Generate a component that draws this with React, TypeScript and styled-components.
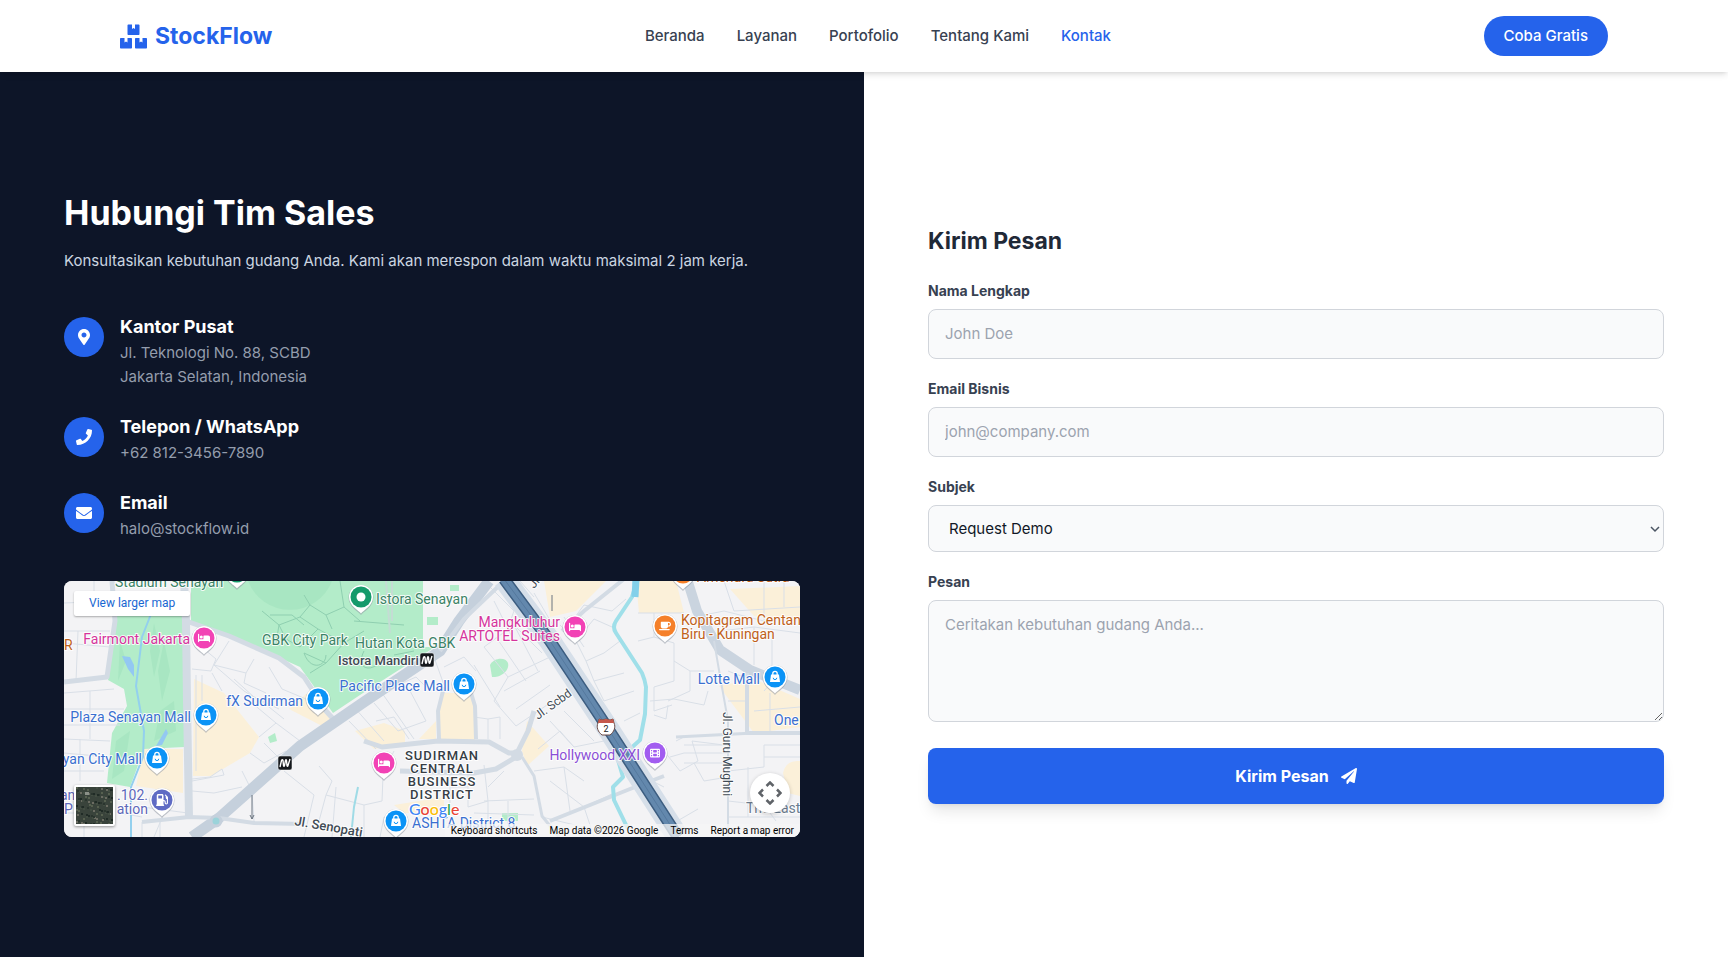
import React from "react";
import styled, { createGlobalStyle } from "styled-components";
import { FaBed, FaFilm, FaGasPump, FaMugSaucer } from "react-icons/fa6";
import { FaBoxes, FaEnvelope, FaMapMarkerAlt, FaPaperPlane, FaPhone } from "react-icons/fa";

const blue = "#2563eb";
const navy = "#0d1528";

const GlobalStyle = createGlobalStyle`
  *, *::before, *::after { box-sizing: border-box; }
  body {
    margin: 0;
    background: #ffffff;
    color: #1f2937;
    font-family: Inter, "Liberation Sans", sans-serif;
    font-size: 16px;
    line-height: 24px;
    -webkit-font-smoothing: antialiased;
  }
  h1, h2, h3, p, address { margin: 0; font-style: normal; }
  a { color: inherit; text-decoration: none; }
  input, select, textarea, button { font: inherit; }
`;

const Page = styled.div`
  display: flex;
  flex-direction: column;
  min-height: 100vh;
`;

const Header = styled.header`
  position: sticky;
  top: 0;
  z-index: 10;
  background: #ffffff;
  box-shadow: 0 4px 6px -1px rgba(0, 0, 0, 0.1), 0 2px 4px -2px rgba(0, 0, 0, 0.1);
`;

const HeaderInner = styled.div`
  display: flex;
  align-items: center;
  justify-content: space-between;
  max-width: 1536px;
  margin: 0 auto;
  padding: 16px 24px;
`;

const Logo = styled.a`
  display: flex;
  align-items: center;
  gap: 8px;
  color: ${blue};
  font-size: 23px;
  line-height: 32px;
  font-weight: 700;
`;

const Nav = styled.nav`
  display: flex;
  gap: 32px;
`;

const NavLink = styled.a<{ $active?: boolean }>`
  color: ${(p) => (p.$active ? blue : "#374151")};
  font-size: 15px;
  font-weight: 500;
`;

const TrialButton = styled.button`
  padding: 8px 20px;
  border: 0;
  border-radius: 20px;
  background: ${blue};
  color: #ffffff;
  font-size: 15px;
  line-height: 24px;
  font-weight: 500;
`;

const Main = styled.main`
  flex: 1;
  display: grid;
  grid-template-columns: repeat(2, minmax(0, 1fr));
`;

const Panel = styled.section<{ $dark?: boolean }>`
  display: flex;
  flex-direction: column;
  justify-content: center;
  padding: 64px;
  background: ${(p) => (p.$dark ? navy : "#ffffff")};
  color: ${(p) => (p.$dark ? "#ffffff" : "#1f2937")};
`;

const Title = styled.h1`
  font-size: 34px;
  line-height: 40px;
  font-weight: 700;
  margin-bottom: 16px;
`;

const Lead = styled.p`
  color: #cbd5e1;
  font-size: 15px;
  margin-bottom: 40px;
`;

const ContactList = styled.div`
  display: flex;
  flex-direction: column;
  gap: 24px;
  margin-bottom: 40px;
`;

const Contact = styled.div`
  display: flex;
  align-items: flex-start;
  gap: 16px;
`;

const ContactIcon = styled.span`
  display: flex;
  align-items: center;
  justify-content: center;
  flex: none;
  width: 40px;
  height: 40px;
  margin-top: 4px;
  border-radius: 50%;
  background: ${blue};
  font-size: 16px;
`;

const ContactName = styled.h3`
  font-size: 18px;
  line-height: 28px;
  font-weight: 700;
`;

const ContactText = styled.address`
  color: #949dad;
  font-size: 15px;
`;

const FormTitle = styled.h2`
  font-size: 23px;
  line-height: 32px;
  font-weight: 700;
  margin-bottom: 24px;
`;

const Form = styled.form`
  display: flex;
  flex-direction: column;
  gap: 20px;
`;

const Field = styled.div`
  display: flex;
  flex-direction: column;
  gap: 8px;
`;

const Label = styled.label`
  color: #374151;
  font-size: 14px;
  line-height: 20px;
  font-weight: 700;
`;

const fieldBox = `
  width: 100%;
  padding: 12px 16px;
  border: 1px solid #d1d5db;
  border-radius: 8px;
  background: #f9fafb;
  color: #111827;
  font-size: 15px;
  line-height: 24px;
  &::placeholder { color: #9ca3af; opacity: 1; }
`;

const Input = styled.input`
  ${fieldBox}
`;

const SelectBox = styled.div`
  position: relative;
`;

const Select = styled.select`
  ${fieldBox}
  display: block;
  height: 47px;
  padding: 0 20px;
  appearance: none;
`;

const Chevron = styled.svg`
  position: absolute;
  top: 20px;
  right: 4px;
  pointer-events: none;
`;

const TextArea = styled.textarea`
  ${fieldBox}
  display: block;
  height: 122px;
  margin-bottom: 6px;
  resize: vertical;
`;

const SubmitButton = styled.button`
  display: flex;
  align-items: center;
  justify-content: center;
  gap: 12px;
  padding: 16px;
  border: 0;
  border-radius: 8px;
  background: ${blue};
  color: #ffffff;
  font-size: 16px;
  line-height: 24px;
  font-weight: 700;
  box-shadow: 0 10px 15px -3px rgba(0, 0, 0, 0.1), 0 4px 6px -4px rgba(0, 0, 0, 0.1);
`;

/* ---------- Map ---------- */

const MapFrame = styled.div`
  position: relative;
  height: 256px;
  overflow: hidden;
  border-radius: 8px;
  background: #f3f3f5;
  font-family: Roboto, "Liberation Sans", sans-serif;
`;

const MapDrawing = styled.svg`
  display: block;
  width: 100%;
  height: 100%;
`;

const LargerMapLink = styled.a`
  position: absolute;
  top: 10px;
  left: 10px;
  padding: 0 15px;
  border-radius: 2px;
  background: #ffffff;
  box-shadow: 0 1px 2px rgba(0, 0, 0, 0.3);
  color: #1967d2;
  font-size: 12px;
  line-height: 25px;
`;

const SatelliteButton = styled.button`
  position: absolute;
  left: 10px;
  bottom: 11px;
  width: 41px;
  height: 41px;
  padding: 0;
  border: 2px solid #ffffff;
  border-radius: 2px;
  overflow: hidden;
  background: #39423b;
  box-shadow: 0 1px 3px rgba(0, 0, 0, 0.4);
`;

const CameraButton = styled.button`
  position: absolute;
  right: 10px;
  bottom: 24px;
  display: flex;
  align-items: center;
  justify-content: center;
  width: 40px;
  height: 40px;
  padding: 0;
  border: 0;
  border-radius: 50%;
  background: #ffffff;
  box-shadow: 0 1px 4px rgba(0, 0, 0, 0.2);
`;

const MapFooter = styled.div`
  position: absolute;
  right: 0;
  bottom: 0;
  display: flex;
  gap: 12px;
  padding: 0 6px;
  background: rgba(245, 245, 245, 0.75);
  color: #000000;
  font-size: 10px;
  line-height: 13px;
`;

const MapTextButton = styled.button`
  padding: 0;
  border: 0;
  background: none;
  color: inherit;
`;

type PinKind = "bag" | "bed" | "cup" | "gas" | "film" | "dot";

const pinColors: Record<PinKind, string> = {
  bag: "#0b93f6",
  bed: "#f242b5",
  cup: "#f5802a",
  gas: "#5f6bc4",
  film: "#a25df0",
  dot: "#159a6b",
};

function Pin({ x, y, kind }: { x: number; y: number; kind: PinKind }) {
  return (
    <g transform={`translate(${x} ${y})`}>
      <path d="M0 18C-2 15-12.500 10-12.500 0.500A12.500 12.500 0 0 1 12.500 0.500C12.500 10 2 15 0 18Z" fill="#8f98a3" opacity="0.55" />
      <path d="M0 16.500C-2 13.500-12 9-12 0A12 12 0 0 1 12 0C12 9 2 13.500 0 16.500Z" fill="#ffffff" />
      <circle r="10.500" fill={pinColors[kind]} />
      {kind === "dot" && <circle r="4.500" fill="#ffffff" />}
      {kind === "bag" && (
        <>
          <path d="M-2.200 -1V-3.500A2.200 2.200 0 0 1 2.200 -3.500V-1" fill="none" stroke="#ffffff" strokeWidth="1.300" />
          <path d="M-4 -2.500H4L5 5H-5Z" fill="#ffffff" />
          <path d="M-1.800 0.800A1.800 1.800 0 0 0 1.800 0.800" fill="none" stroke={pinColors.bag} strokeWidth="1" />
        </>
      )}
      {kind === "bed" && <FaBed x={-6} y={-6} size={12} color="#ffffff" />}
      {kind === "cup" && <FaMugSaucer x={-6} y={-6} size={12} color="#ffffff" />}
      {kind === "gas" && <FaGasPump x={-6} y={-6} size={12} color="#ffffff" />}
      {kind === "film" && <FaFilm x={-5} y={-5} size={10} color="#ffffff" />}
    </g>
  );
}

function Metro({ x, y }: { x: number; y: number }) {
  return (
    <g transform={`translate(${x} ${y})`}>
      <rect x="-7" y="-7" width="14" height="14" rx="2" fill="#15181c" stroke="#ffffff" strokeWidth="0.500" />
      <path
        d="M-5 4L-3.500 -2.500Q-2.500 -4 -2 -2.500L-1.500 2.500Q-1 4 -0.500 2.500L0.500 -2.500Q1 -4 1.500 -2.500L2 2.500Q2.500 4 3 2.500L5 -4"
        fill="none"
        stroke="#ffffff"
        strokeWidth="1.400"
      />
    </g>
  );
}

type PlaceTone = "park" | "shop" | "hotel" | "food" | "cinema" | "fuel" | "area" | "road";

const placeColors: Record<PlaceTone, string> = {
  park: "#3b8266",
  shop: "#3a6fd0",
  hotel: "#d5349c",
  food: "#c0611a",
  cinema: "#8a4fd6",
  fuel: "#5d68ba",
  area: "#6b7c8f",
  road: "#3f4a54",
};

const Place = styled.text<{ $tone: PlaceTone }>`
  fill: ${(p) => placeColors[p.$tone]};
  font-size: ${(p) => (p.$tone === "road" ? 12 : 14)}px;
  stroke: #ffffff;
  stroke-width: 2px;
  stroke-opacity: 0.85;
  stroke-linejoin: round;
  paint-order: stroke;
`;

const StationLabel = styled(Place)`
  font-size: 13px;
  font-weight: 500;
`;

const DistrictLabel = styled.text`
  fill: #363d45;
  font-size: 13px;
  font-weight: 500;
  letter-spacing: 1px;
  text-anchor: middle;
  stroke: #ffffff;
  stroke-width: 2px;
  paint-order: stroke;
`;

const Wordmark = styled.text`
  font-family: Lato, sans-serif;
  font-size: 16px;
  font-weight: 500;
  stroke: #ffffff;
  stroke-width: 2px;
  paint-order: stroke;
`;

const minorRoads = [
  "M0 50H46M0 62L46 66M14 50L12 100M0 22L48 20M30 0V20",
  "M0 112L50 108M0 128H60M0 144H56M0 158L46 160M26 110V158M16 158V200M0 172L44 176M0 190H40",
  "M128 58L152 78L147 90L128 88M165 60L150 84L182 92L180 102L202 112M150 84L180 110L200 122L220 138",
  "M132 94V190M138 94V120M148 92L158 110M170 98L190 116L215 128M190 78L182 92M205 86L218 108L242 118",
  "M195 156L212 142L236 160M212 142L188 122M186 172L200 182L222 170M200 162L216 178M178 190L186 206",
  "M128 198L146 196L158 188L160 194L128 200M128 210L150 212L178 206M78 241V256M96 241V256M78 226L124 232",
  "M188 212L190 240M220 190L250 214L240 256M255 185L268 200L262 214L300 224L318 220L320 170M272 206L268 256M300 224V256M262 214L255 240",
  "M285 140L312 168M290 126L320 160M310 122L334 150L362 140L345 108M318 112L350 158M334 104L352 96L366 110M312 140L330 136L345 158",
  "M370 76L380 104M380 86L400 76L412 90M420 66L444 96L430 120L452 145L486 122M410 84L436 126M444 96L486 76M420 66L450 44L478 72",
  "M432 56L462 100M450 44L474 90M440 110L476 90M452 128L486 104M410 136L424 138L436 136V158M424 138V158",
  "M386 190V226M404 190V226M386 206H404M420 184L424 220L404 226M420 220L470 218M424 220V256M444 220V256M410 232L470 234M440 190L424 206",
  "M474 168L496 150L510 166L540 160M470 190L500 186L520 200M500 186L506 230M486 200L520 226L550 212M520 226L530 256M478 236L560 256",
  "M496 44L512 60L530 38L548 46M512 60L522 80L540 72L556 60M522 80L530 100L560 92M508 40L520 24L548 30L562 18M530 100L540 120L570 110M500 36L520 66",
  "M500 130L530 160M486 140L510 166M560 140L576 132M550 150L570 176M574 60L590 56L610 62V100L590 106V130L608 124M610 80L626 90H650M626 90V110L604 120",
  "M574 32H620M590 32V56M586 120L610 118L640 124M604 124L602 138L590 134M640 124L644 110M640 34L660 30L700 40M660 0L670 30L736 26M700 0V40M720 0V26",
  "M656 50L690 46L736 52M690 46V84M708 50V90M664 90L690 100M700 110L712 96M664 120H683M690 130L736 126M706 112V150",
  "M600 170L616 190L634 180L628 160L660 164M612 160L620 156M606 176L620 172M620 172H664M620 182H664M620 164H664M630 182L640 200L664 196",
  "M664 190L700 186V164H736M700 176H736M664 220L700 224L712 240M664 236H736M684 186V236M596 250L634 228M570 190L600 220L590 236M580 196L600 206",
  "M0 232H40M20 240V256M56 232L78 236M100 232L90 256M320 190L330 170M330 250L320 236L316 256",
  "M426 6L450 30L444 46M450 10L470 30L480 56M456 0L470 16M430 20L448 56M440 14C460 4 470 20 478 40M470 12L490 46",
];

const mainRoads: { d: string; w: number; c?: string }[] = [
  { d: "M48 0L51 40L43 96L0 101", w: 5 },
  { d: "M120 0L122 40L123 120L125 236", w: 8 },
  { d: "M125 41L165 55L215 77L240 96L262 130L272 141", w: 5 },
  { d: "M128 256L155 237L236 165L300 121L376 70L395 40L425 0", w: 11, c: "#c5d0dc" },
  { d: "M440 0L400 38L376 70", w: 4 },
  { d: "M78 241L125 236L155 237L190 242L240 243", w: 4 },
  { d: "M300 160L318 166L374 160L425 161L445 172L453 172L464 150L470 130", w: 5 },
  { d: "M336 190L410 192L432 188L452 176", w: 5 },
  { d: "M375 158L374 130L380 106", w: 4 },
  { d: "M412 158L411 125L404 102", w: 4 },
  { d: "M458 176L470 195L478 235L495 256", w: 3 },
  { d: "M486 240L566 208L600 195", w: 4 },
  { d: "M560 -2L520 30L498 50", w: 4 },
  { d: "M623 -2L633 30L656 69L686 89L736 109", w: 10, c: "#cad4df" },
  { d: "M650 60L656 95L664 140V256", w: 2 },
  { d: "M683 92V152H736", w: 4 },
  { d: "M612 156L690 152", w: 3 },
];

function MapArtwork() {
  return (
    <MapDrawing viewBox="0 0 736 256" preserveAspectRatio="xMidYMid slice" role="img" aria-label="Peta SCBD Jakarta Selatan">
      <rect width="736" height="256" fill="#f3f3f5" />
      <g fill="#fbf0d9">
        <path d="M130 98L160 112L195 156L186 172L147 195H129Z" />
        <path d="M80 168H119V212L72 205Z" />
        <path d="M243 112L272 138L262 147L225 128Z" />
        <path d="M377 112H409L411 159H374Z" />
        <path d="M291 150L320 142L341 150V162L310 168Z" />
        <path d="M355 158L372 140V158Z" />
        <path d="M463 140L485 165L463 185L458 170Z" />
        <path d="M480 0H542L512 30L486 36Z" />
        <path d="M572 0H612L620 32H575Z" />
        <path d="M666 8L736 5V40L690 35Z" />
        <path d="M655 105L690 98L736 118V146L690 152Z" />
        <path d="M719 192C722 180 730 180 736 180V215L724 212Z" />
        <path d="M330 224L380 216V232H340Z" />
      </g>
      <g fill="#b3ecc9">
        <path d="M51 30L47 75L44 99L60 108L63 125L48 152L43 202L66 206L80 168L120 166V30Z" />
        <path d="M127 0V42L160 53L205 72L236 86L269 132L305 108L371 66H359V0Z" />
        <path d="M426 84C430 76 442 76 444 82C446 90 436 97 428 96Z" />
        <rect x="363" y="36" width="11" height="8" />
        <rect x="386" y="4" width="9" height="6" />
        <rect x="438" y="232" width="16" height="8" />
        <path d="M204 156L211 152L213 160L206 162Z" />
      </g>
      <g fill="#a8e6c2">
        <path d="M184 0A45 45 0 0 0 268 0Z" />
        <path d="M90 42L96 70L90 96L86 70Z" />
        <path d="M100 60L106 90L98 120L94 90Z" />
        <path d="M56 60L62 80L54 100Z" />
        <path d="M96 130L110 120L112 150L90 160Z" />
        <path d="M52 160L66 150L60 190L48 198Z" />
      </g>
      <g fill="none" stroke="#8fcfb0" strokeWidth="1">
        <path d="M198 30L215 44L212 62M215 44L236 36L254 48L236 66L222 58Z M236 36L246 24L262 34L280 26M254 48L280 62L262 82L240 72M280 62L300 50M246 24L240 14M262 82L246 92M206 34L228 34L240 44M280 26L276 0M280 26L296 40M290 40L340 44M262 34L268 48" />
        <path d="M240 72C246 90 262 86 262 74M300 70C290 90 310 92 318 78M330 74L350 70" />
        <path d="M322 0L326 52M328 0V40" stroke="#c4dcd4" strokeWidth="2" />
      </g>
      <g fill="none" stroke="#d9dfe7" strokeWidth="1">
        {minorRoads.map((d) => (
          <path key={d} d={d} />
        ))}
      </g>
      <g fill="none" strokeLinejoin="round">
        {mainRoads.map((r) => (
          <path key={r.d} d={r.d} stroke={r.c ?? "#d3dbe4"} strokeWidth={r.w} />
        ))}
        <path d="M87 33L78 56L72 105L80 150L79 176L67 206V256" stroke="#93d0ee" strokeWidth="2" />
        <path d="M58 75L66 76L70 84L70 96L64 88Z M102 148L92 165L98 164L104 152Z" fill="#93c8f2" />
        <path d="M294 206L290 226L287 256" stroke="#9fdbe6" strokeWidth="2" />
        <path d="M574 -2L568 16L552 40Q548 46 552 52L578 92Q581 99 582 106L581 133L576 159L554 179L559 196L549 206L550 219L564 248" stroke="#9fdfe9" strokeWidth="4" />
        <path d="M572 -2L571 16" stroke="#83d0ea" strokeWidth="7" />
        <circle cx="152" cy="240" r="5" fill="#9bd3da" stroke="#c5d0dc" strokeWidth="3" />
        <circle cx="453" cy="174" r="6" fill="#d3dbe4" />
        <path d="M440 -2L486 60L543 146L614 256" stroke="#d6dfe9" strokeWidth="22" />
        <path d="M440 -2L486 60L543 146L614 256" stroke="#3c5d80" strokeWidth="12" />
        <path d="M440 -2L486 60L543 146L614 256" stroke="#6388ad" strokeWidth="9" />
        <path d="M440 -2L486 60L543 146L614 256" stroke="#55799e" strokeWidth="1" />
        <path d="M188 214V238M186 234L188 238L190 234M488 14V30" stroke="#6b7580" strokeWidth="1" />
      </g>

      <Place $tone="park" x="51" y="6">Stadium Senayan</Place>
      <Place $tone="park" x="312" y="23">Istora Senayan</Place>
      <Place $tone="park" x="198" y="64">GBK City Park</Place>
      <Place $tone="park" x="291" y="67">Hutan Kota GBK</Place>
      <StationLabel $tone="road" x="274" y="84">Istora Mandiri</StationLabel>
      <Place $tone="food" x="0" y="69">R</Place>
      <Place $tone="hotel" x="126" y="63" textAnchor="end">Fairmont Jakarta</Place>
      <Place $tone="hotel" x="496" y="46" textAnchor="end">Mangkuluhur</Place>
      <Place $tone="hotel" x="496" y="60" textAnchor="end">ARTOTEL Suites</Place>
      <Place $tone="food" x="633" y="1">Amendra Sutra</Place>
      <Place $tone="food" x="617" y="44">Kopitagram Centan</Place>
      <Place $tone="food" x="617" y="58">Biru - Kuningan</Place>
      <Place $tone="shop" x="386" y="110" textAnchor="end">Pacific Place Mall</Place>
      <Place $tone="shop" x="239" y="125" textAnchor="end">fX Sudirman</Place>
      <Place $tone="shop" x="127" y="141" textAnchor="end">Plaza Senayan Mall</Place>
      <Place $tone="shop" x="78" y="183" textAnchor="end">yan City Mall</Place>
      <Place $tone="shop" x="696" y="103" textAnchor="end">Lotte Mall</Place>
      <Place $tone="shop" x="710" y="144">One</Place>
      <Place $tone="shop" x="348" y="247">ASHTA District 8</Place>
      <Place $tone="cinema" x="576" y="179" textAnchor="end">Hollywood XXI</Place>
      <Place $tone="fuel" x="-4" y="219">an</Place>
      <Place $tone="fuel" x="84" y="219" textAnchor="end">.102.</Place>
      <Place $tone="fuel" x="0" y="233">P</Place>
      <Place $tone="fuel" x="84" y="233" textAnchor="end">ation</Place>
      <Place $tone="area" x="682" y="232">The East</Place>
      <Place $tone="road" transform="translate(474 139) rotate(-36)">Jl. Scbd</Place>
      <Place $tone="road" transform="translate(470 8) rotate(-50)">Jl.</Place>
      <Place $tone="road" transform="translate(659 131) rotate(90)">Jl. Guru Mughni</Place>
      <StationLabel $tone="road" transform="translate(230 244) rotate(10)">Jl. Senopati</StationLabel>
      <DistrictLabel x="378" y="179">SUDIRMAN</DistrictLabel>
      <DistrictLabel x="378" y="192">CENTRAL</DistrictLabel>
      <DistrictLabel x="378" y="205">BUSINESS</DistrictLabel>
      <DistrictLabel x="378" y="218">DISTRICT</DistrictLabel>

      <Metro x={363} y={79} />
      <Metro x={221} y={182} />
      <Pin x={173} y={-9} kind="dot" />
      <Pin x={297} y={16} kind="dot" />
      <Pin x={140} y={57} kind="bed" />
      <Pin x={511} y={46} kind="bed" />
      <Pin x={320} y={182} kind="bed" />
      <Pin x={619} y={-8} kind="cup" />
      <Pin x={601} y={45} kind="cup" />
      <Pin x={400} y={103} kind="bag" />
      <Pin x={254} y={118} kind="bag" />
      <Pin x={142} y={134} kind="bag" />
      <Pin x={93} y={177} kind="bag" />
      <Pin x={332} y={240} kind="bag" />
      <Pin x={711} y={96} kind="bag" />
      <Pin x={98} y={219} kind="gas" />
      <Pin x={591} y={172} kind="film" />

      <g transform="translate(542 146)">
        <path d="M-7 -8L-4 -7L0 -8L4 -7L7 -8L8 -4C10 0 8 5 4 8H-4C-8 5 -10 0 -8 -4Z" fill="#ffffff" stroke="#6a4a46" strokeWidth="1" />
        <path d="M-7 -8L-4 -7L0 -8L4 -7L7 -8L8 -4H-8Z" fill="#c6584b" />
        <text y="5" textAnchor="middle" fontSize="9" fill="#222222">2</text>
      </g>

      <Wordmark x="345" y="234">
        <tspan fill="#4285f4">G</tspan>
        <tspan fill="#ea4335">o</tspan>
        <tspan fill="#fbbc04">o</tspan>
        <tspan fill="#4285f4">g</tspan>
        <tspan fill="#34a853">l</tspan>
        <tspan fill="#ea4335">e</tspan>
      </Wordmark>
    </MapDrawing>
  );
}

function SatelliteArtwork() {
  const specks = Array.from({ length: 110 }, (_, i) => ({
    x: (i * 17 + ((i * i) % 7)) % 38,
    y: (i * 11 + ((i * i) % 5) * 3) % 38,
    c: ["#56604f", "#2a352e", "#6b6c62", "#424d42", "#202b26"][i % 5],
  }));
  return (
    <svg width="37" height="37" viewBox="0 0 37 37" display="block" aria-hidden="true">
      <rect width="37" height="37" fill="#39433b" />
      {specks.map((s, i) => (
        <rect key={i} x={s.x} y={s.y} width="2" height="2" fill={s.c} />
      ))}
      <rect x="9" y="5" width="4" height="3" fill="#8b9088" />
    </svg>
  );
}

function LocationMap() {
  return (
    <MapFrame>
      <MapArtwork />
      <LargerMapLink href="#peta">View larger map</LargerMapLink>
      <SatelliteButton type="button" aria-label="Show satellite imagery">
        <SatelliteArtwork />
      </SatelliteButton>
      <CameraButton type="button" aria-label="Map camera controls">
        <svg width="24" height="24" viewBox="0 0 24 24" fill="none" stroke="#5f6368" strokeWidth="2.500" aria-hidden="true">
          <path d="M8.500 5L12 1.500L15.500 5M8.500 19L12 22.500L15.500 19M5 8.500L1.500 12L5 15.500M19 8.500L22.500 12L19 15.500" />
        </svg>
      </CameraButton>
      <MapFooter>
        <MapTextButton type="button">Keyboard shortcuts</MapTextButton>
        <span>Map data ©2026 Google</span>
        <a href="#terms">Terms</a>
        <a href="#report">Report a map error</a>
      </MapFooter>
    </MapFrame>
  );
}

const navItems = ["Beranda", "Layanan", "Portofolio", "Tentang Kami", "Kontak"];

const contacts = [
  { name: "Kantor Pusat", lines: ["Jl. Teknologi No. 88, SCBD", "Jakarta Selatan, Indonesia"], icon: <FaMapMarkerAlt /> },
  { name: "Telepon / WhatsApp", lines: ["+62 812-3456-7890"], icon: <FaPhone /> },
  { name: "Email", lines: ["halo@stockflow.id"], icon: <FaEnvelope /> },
];

export default function App() {
  return (
    <Page>
      <GlobalStyle />
      <Header>
        <HeaderInner>
          <Logo href="#beranda">
            <FaBoxes size={27} />
            StockFlow
          </Logo>
          <Nav>
            {navItems.map((item) => (
              <NavLink key={item} href={`#${item.toLowerCase().replace(" ", "-")}`} $active={item === "Kontak"}>
                {item}
              </NavLink>
            ))}
          </Nav>
          <TrialButton type="button">Coba Gratis</TrialButton>
        </HeaderInner>
      </Header>
      <Main>
        <Panel $dark>
          <Title>Hubungi Tim Sales</Title>
          <Lead>Konsultasikan kebutuhan gudang Anda. Kami akan merespon dalam waktu maksimal 2 jam kerja.</Lead>
          <ContactList>
            {contacts.map((c) => (
              <Contact key={c.name}>
                <ContactIcon>{c.icon}</ContactIcon>
                <div>
                  <ContactName>{c.name}</ContactName>
                  <ContactText>
                    {c.lines.map((line) => (
                      <div key={line}>{line}</div>
                    ))}
                  </ContactText>
                </div>
              </Contact>
            ))}
          </ContactList>
          <LocationMap />
        </Panel>
        <Panel>
          <FormTitle>Kirim Pesan</FormTitle>
          <Form onSubmit={(e) => e.preventDefault()}>
            <Field>
              <Label htmlFor="nama">Nama Lengkap</Label>
              <Input id="nama" type="text" placeholder="John Doe" />
            </Field>
            <Field>
              <Label htmlFor="email">Email Bisnis</Label>
              <Input id="email" type="email" placeholder="john@company.com" />
            </Field>
            <Field>
              <Label htmlFor="subjek">Subjek</Label>
              <SelectBox>
                <Select id="subjek">
                  <option>Request Demo</option>
                </Select>
                <Chevron width="10" height="8" viewBox="0 0 10 8" fill="none" stroke="#4b5563" strokeWidth="1.500" aria-hidden="true">
                  <path d="M1 2L5 6L9 2" />
                </Chevron>
              </SelectBox>
            </Field>
            <Field>
              <Label htmlFor="pesan">Pesan</Label>
              <TextArea id="pesan" rows={4} placeholder="Ceritakan kebutuhan gudang Anda..." />
            </Field>
            <SubmitButton type="submit">
              Kirim Pesan
              <FaPaperPlane size={16} />
            </SubmitButton>
          </Form>
        </Panel>
      </Main>
    </Page>
  );
}
